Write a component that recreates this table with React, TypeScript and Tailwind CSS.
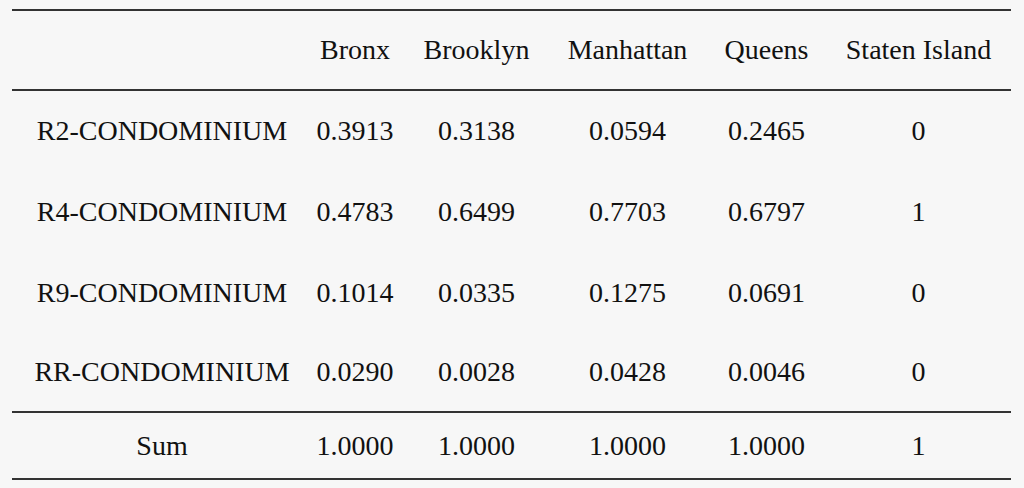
const columns = ['Bronx', 'Brooklyn', 'Manhattan', 'Queens', 'Staten Island']

const rows = [
  { label: 'R2-CONDOMINIUM', values: ['0.3913', '0.3138', '0.0594', '0.2465', '0'], h: 'h-[80px]' },
  { label: 'R4-CONDOMINIUM', values: ['0.4783', '0.6499', '0.7703', '0.6797', '1'], h: 'h-[81px]' },
  { label: 'R9-CONDOMINIUM', values: ['0.1014', '0.0335', '0.1275', '0.0691', '0'], h: 'h-[81px]' },
  { label: 'RR-CONDOMINIUM', values: ['0.0290', '0.0028', '0.0428', '0.0046', '0'], h: 'h-[78px]' },
]

const sum = ['1.0000', '1.0000', '1.0000', '1.0000', '1']

const grid = 'grid grid-cols-[286px_100px_143px_159px_119px_185px] pl-[7px] items-center text-center'

function Rule() {
  return <div className="h-[2px] bg-[#333333]" />
}

export default function App() {
  return (
    <div className="min-h-screen bg-[#f7f7f7] text-[#111111] text-[28px] leading-[28px] font-['Liberation_Serif','Times_New_Roman',serif]">
      <div className="w-[999px] ml-[12px] pt-[9px]">
        <Rule />
        <div className={`${grid} h-[78px]`}>
          <div />
          {columns.map((c) => (
            <div key={c}>{c}</div>
          ))}
        </div>
        <Rule />
        {rows.map((r) => (
          <div key={r.label} className={`${grid} ${r.h}`}>
            <div>{r.label}</div>
            {r.values.map((v, i) => (
              <div key={i}>{v}</div>
            ))}
          </div>
        ))}
        <Rule />
        <div className={`${grid} h-[65px]`}>
          <div>Sum</div>
          {sum.map((v, i) => (
            <div key={i}>{v}</div>
          ))}
        </div>
        <Rule />
      </div>
    </div>
  )
}
